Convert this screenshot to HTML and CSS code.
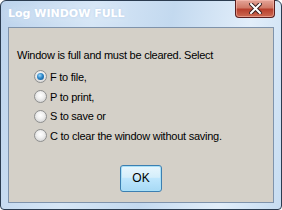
FILE: index.html
```html
<!DOCTYPE html>
<html lang="en">
<head>
    <meta charset="UTF-8">
    <title>Log WINDOW FULL</title>
    <link rel="stylesheet" href="styles.css">
</head>
<body>
    <div class="window">
        <div class="titlebar">
            <span class="title">Log WINDOW FULL</span>
            <div class="close">
                <svg width="13" height="11" viewBox="0 0 13 11">
                    <path d="M2 1 L11 10 M11 1 L2 10" stroke="#3a2020" stroke-width="4" stroke-linecap="square"/>
                    <path d="M2 1 L11 10 M11 1 L2 10" stroke="#ffffff" stroke-width="2" stroke-linecap="square"/>
                </svg>
            </div>
        </div>
        <div class="client">
            <p class="message">Window is full and must be cleared. Select</p>
            <div class="options">
                <label class="option"><span class="radio checked"></span>F to file,</label>
                <label class="option"><span class="radio"></span>P to print,</label>
                <label class="option"><span class="radio"></span>S to save or</label>
                <label class="option"><span class="radio"></span>C to clear the window without saving.</label>
            </div>
            <div class="actions">
                <button class="ok">OK</button>
            </div>
        </div>
    </div>
</body>
</html>
```

FILE: styles.css
```css
* {
    margin: 0;
    padding: 0;
    box-sizing: border-box;
}
body {
    font-family: "Liberation Sans", Arial, sans-serif;
    background: #ffffff;
}
.window {
    width: 282px;
    height: 210px;
    border: 1px solid #2b3c50;
    border-radius: 6px 6px 4px 4px;
    background: linear-gradient(100deg, #bcd3ec 0%, #d6e6f6 30%, #c3d9ef 55%, #e2eefa 80%, #c6dcf1 100%);
    display: flex;
    flex-direction: column;
    padding: 0 7px 6px 7px;
}
.titlebar {
    height: 26px;
    display: flex;
    justify-content: space-between;
    align-items: flex-start;
}
.title {
    margin-top: 6px;
    font-family: "DejaVu Sans", sans-serif;
    font-weight: bold;
    font-size: 11px;
    color: #ffffff;
    text-shadow: 0 0 3px #b4cce8, 0 0 8px #e8f2fc;
}
.close {
    width: 40px;
    height: 18px;
    margin-right: -1px;
    margin-top: -1px;
    border: 1px solid #5a1e1e;
    border-top: none;
    border-radius: 0 0 4px 4px;
    background: linear-gradient(#e4a498 0%, #d07a68 45%, #b8402e 55%, #cc6a52 100%);
    box-shadow: inset 0 0 0 1px rgba(255, 200, 190, 0.5);
    display: flex;
    justify-content: center;
    align-items: center;
}
.client {
    flex: 1;
    border: 1px solid #7f93ab;
    background: #d4d0c8;
    display: flex;
    flex-direction: column;
    padding: 20px 8px 0 8px;
    font-size: 11px;
    letter-spacing: -0.25px;
    color: #000000;
}
.message {
    line-height: 14px;
}
.options {
    display: flex;
    flex-direction: column;
    margin-top: 5px;
    padding-left: 17px;
}
.option {
    display: flex;
    align-items: center;
    gap: 3px;
    height: 19.7px;
}
.radio {
    width: 13px;
    height: 13px;
    border-radius: 50%;
    border: 1px solid #8e8f8f;
    background: radial-gradient(circle at 50% 40%, #ffffff 0%, #f0f0f0 40%, #c8c8c8 100%);
    display: flex;
    justify-content: center;
    align-items: center;
}
.radio.checked::after {
    content: "";
    width: 7px;
    height: 7px;
    border-radius: 50%;
    background: radial-gradient(circle at 40% 35%, #9fd6f8 0%, #2b86c8 45%, #154f86 100%);
}
.actions {
    display: flex;
    justify-content: center;
    margin-top: 19px;
}
.ok {
    width: 42px;
    height: 27px;
    border: 1px solid #3c7fb1;
    border-radius: 3px;
    background: linear-gradient(#e8f6fd 0%, #d4eefb 45%, #bee6fd 50%, #a7d9f5 100%);
    box-shadow: inset 0 0 0 1px #a8e0f8;
    font-family: "Liberation Sans", Arial, sans-serif;
    font-size: 12px;
    color: #000000;
}
```
